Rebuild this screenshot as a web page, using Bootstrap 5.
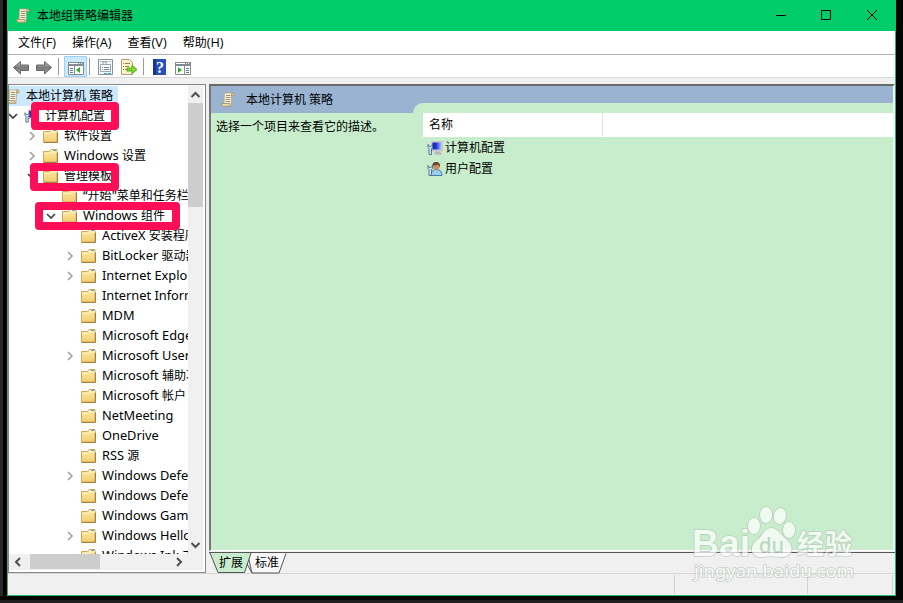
<!DOCTYPE html>
<html lang="zh-CN">
<head>
<meta charset="utf-8">
<title>本地组策略编辑器</title>
<link href="https://cdn.jsdelivr.net/npm/bootstrap@5.3.0/dist/css/bootstrap.min.css" rel="stylesheet">
<style>
body{width:903px;height:603px;background:#050505;font:12px/20px "Open Sans","Noto Sans CJK SC",sans-serif;color:#000;border-bottom:3px solid #202020}
svg{display:block;flex:none}
.la{font-family:"Noto Sans","Open Sans",sans-serif;font-size:12.8px;line-height:18px;padding-bottom:2px}
.side{width:7px;background:linear-gradient(90deg,#292929 0 3px,#000 3px)}
.win{width:889px;height:596px;background:#f0f0f0;border:solid #22b573;border-width:0 1px 1px}
.title-bar{height:31px;margin:0 -1px;background:#00cc6a;padding-left:9px}
.title-bar span{padding-left:7px}
.menus{height:24px;padding-left:10px;border-bottom:1px solid #b0b0b0}
.menus span{margin-right:16px}
.menus i{font-style:normal;font-size:12.7px}
.tools{height:23px;border-bottom:1px solid #d8d8d8}
.work{height:495px;padding-top:6px}
.tree-pane{width:198px;height:489px;border:1px solid #828790;margin-right:3px}
.tree-box{width:179px;height:469px;padding-top:1px}
.tr{height:20px;white-space:nowrap;position:relative}
.tr>svg{margin-right:6px}
.l1{padding-left:15px}.l2{padding-left:34px}.l3{padding-left:53px}.l4{padding-left:72px}
.tr .exp{position:absolute;margin:0;top:4px}
.l1 .exp{left:-1px}.l2 .exp{left:18px}.l3 .exp{left:37px}.l4 .exp{left:56px}
.sel{background:#cce8ff;width:109px}
.vbar{width:15px;background:#f0f0f0;height:469px}
.vthumb{height:104px;background:#cdcdcd}
.hbar{height:16px;background:#f0f0f0;width:194px}
.hthumb{width:70px;height:15px;background:#cdcdcd}
.right-pane{width:686px}
.result{height:467px;border:solid;border-width:2px 2px 1px 2px;border-color:#696969 #f4f4f4 #fff #777;background:#c8edcc}
.head{height:27px;background:#99b3d1;padding-left:10px}
.head span{padding-left:11px}
.notch{width:480px;height:10px;background:#c8edcc;border-top-left-radius:10px;align-self:flex-end}
.desc{width:212px;padding:4px 0 0 5px}
.colhead{height:24px;background:#fff;padding-left:6px}
.colname{width:174px;border-right:1px solid #e5e5e5;height:24px;line-height:23px}
.item{height:21px;padding-left:4px;gap:2px}
.tabs{height:22px;border-top:1px solid #555;margin-top:1px}
.tabs svg text{font-size:12px}
.status{height:22px;border-top:1px solid #d7d7d7}
.cell{border-right:1px solid #d2d2d2;margin:1px 0}
.mark-box{position:absolute;border:8px solid #ff0e57;border-radius:4px}
.wm{position:absolute;left:685px;top:500px}
</style>
<script src="https://cdn.jsdelivr.net/npm/bootstrap@5.3.0/dist/js/bootstrap.bundle.min.js"></script>
</head>
<body class="position-relative overflow-hidden m-0">
<svg width="0" height="0" class="position-absolute">
<linearGradient id="fg" x2="0" y2="1"><stop stop-color="#ffe9a6"/><stop offset="1" stop-color="#f3ce72"/></linearGradient>
<linearGradient id="ag" x2="0" y2="1"><stop stop-color="#c8c8c8"/><stop offset=".5" stop-color="#777"/><stop offset="1" stop-color="#aaa"/></linearGradient>
<linearGradient id="sg"><stop stop-color="#1420b4"/><stop offset=".45" stop-color="#1d36e0"/><stop offset="1" stop-color="#9db8ff"/></linearGradient>
<symbol id="folder" viewBox="0 0 15 14"><path d="M.5 2.500h6l1.500-2h6v12.500H.5z" fill="url(#fg)" stroke="#cfa858"/><path d="M1 4.500h6.500l1.500-1.500h5" fill="none" stroke="#fff1c2"/><path d="M8 1.500h3" stroke="#fff"/><path d="M10 1.500h3" stroke="#54a7e2"/><path d="M.5 13.500h14v-10" fill="none" stroke="#a9803a"/></symbol>
<symbol id="scroll" viewBox="0 0 14 15"><path d="M3.500 1h8l-1 2.500-.5 10.500H2l1-3z" fill="#fbf2d8" stroke="#b3a583" stroke-width=".8"/><path d="M11 .8q2.800.2 2 3h-2.500zM.6 11.500h8.200q-.8 1.500.8 2.700H2Q.4 13.500.6 11.500z" fill="#efdcae" stroke="#9d8a60" stroke-width=".8"/><path d="M5 3.500h4.500M5 5.500h4.500M4.500 7.500h4.500M4.500 9.500h4.500" stroke="#9b927e"/></symbol>
<symbol id="right" viewBox="0 0 10 12"><path d="M3 2l4 4-4 4" fill="none" stroke="#a0a0a0" stroke-width="1.600"/></symbol>
<symbol id="down" viewBox="0 0 10 12"><path d="M1 4l4 4 4-4" fill="none" stroke="#404040" stroke-width="1.700"/></symbol>
<symbol id="pc" viewBox="0 0 16 14"><path d="M4 0h12v10.500H4z" fill="#c9c9cf"/><path d="M5.500 1.500h8.500v7H5.500z" fill="url(#sg)"/><path d="M8 10.500h5l2 3H7z" fill="#b5b5b5"/><path d="M1 3.500v3l1 1v6h2.500v-6l1-1v-3L4 5.500H2.500z" fill="#d5e4ed" stroke="#47698a" stroke-width=".9"/></symbol>
<symbol id="user" viewBox="0 0 16 14"><path d="M4 13.500Q4 7.500 9 7.500q6 0 6 6z" fill="#9bcbee" stroke="#4d7fa5"/><circle cx="9.500" cy="4.500" r="3.300" fill="#c88f60"/><path d="M5.500 4Q5 0 9 0q4.500 0 4 5l-2-2.500z" fill="#654329"/><path d="M1 3.500v3l1 1v6h2.500v-6l1-1v-3L4 5.500H2.500z" fill="#d5e4ed" stroke="#47698a" stroke-width=".9"/></symbol>
</svg>
<div class="d-flex">
<div class="side"></div>
<main class="win">
<header class="title-bar d-flex align-items-center">
<svg width="14" height="15"><use href="#scroll"/></svg><span class="flex-grow-1">本地组策略编辑器</span>
<svg width="120" height="31"><g stroke="#000" fill="none"><path d="M0 15.500h10"/><path d="M45.500 10.500h9v9h-9z"/><path d="M91 10l10 10M101 10l-10 10"/></g></svg>
</header>
<nav class="menus bg-white d-flex align-items-center"><span>文件<i>(F)</i></span><span>操作<i>(A)</i></span><span>查看<i>(V)</i></span><span>帮助<i>(H)</i></span></nav>
<div class="tools bg-white">
<svg width="190" height="23">
<g fill="url(#ag)" stroke="#666"><path d="M5.500 12.500l7-6v3.500h8v5.500h-8v3.500z"/><path d="M43.500 12.500l-7-6v3.500h-8v5.500h8v3.500z"/></g>
<path d="M50.500 3v17M81.500 3v17M135.500 3v17" stroke="#999"/>
<path d="M56.500 1.500h22v20h-22z" fill="#cce8ff" stroke="#99d1ff"/>
<path d="M60.500 7.500h15v12h-15z" fill="#fff" stroke="#888"/><path d="M60 7h16v4H60z" fill="#858b92"/><path d="M61 8.500h9m1 0h1m1 0h1" stroke="#fff"/><path d="M66.500 11v8" stroke="#888"/><path d="M62 13.500h3m-3 2h3m-3 2h3" stroke="#527fa8"/><path d="M72 12v6l-4-3z" fill="#35ae22"/>
<path d="M90.500 4.500h14v15h-14z" fill="#f6f8fa" stroke="#8b9298"/><path d="M92 6.500h8m1 0h2" stroke="#9cb8c9"/><path d="M92.500 9.500h10v7h-10zM95 9v-2h3v2" fill="#fff" stroke="#9ca6af"/><path d="M94 12.500h1m1 0h5m-7 2h1m1 0h5" stroke="#718da5"/><path d="M96 18.500h3m1 0h3" stroke="#27aae8"/>
<path d="M113.500 4.500h8l3 3v12h-11z" fill="#fff2c4" stroke="#b0a080"/><path d="M115 8.500h1m1 0h5m-7 3h1m1 0h4m-6 3h1m1 0h4" stroke="#8b8060"/><path d="M119 13h5v-3l5 4.500-5 4.500v-3h-5z" fill="#7bd52e" stroke="#59aa27"/>
<path d="M145 4h13v16h-13z" fill="#2850bd"/><path d="M145 4h3v16h-3z" fill="#18348b"/><text x="148" y="17.500" fill="#fff" font-family="Liberation Serif" font-weight="700" font-size="16">?</text>
<path d="M167.500 7.500h15v12h-15z" fill="#fff" stroke="#888"/><path d="M167 7h16v4h-16z" fill="#858b92"/><path d="M168 8.500h9m1 0h1m1 0h1" stroke="#fff"/><path d="M176.500 11v8" stroke="#888"/><path d="M178 13.500h3m-3 2h3m-3 2h3" stroke="#527fa8"/><path d="M170 12v6l4-3z" fill="#35ae22"/>
</svg></div>
<div class="work d-flex">
<aside class="tree-pane bg-white">
<div class="d-flex">
<div class="tree-box overflow-hidden" id="tree">
<div class="tr d-flex align-items-center sel"><svg width="11" height="15" viewBox="3 0 11 15"><use href="#scroll" width="14" height="15"/></svg>本地计算机 策略</div>
<div class="tr d-flex align-items-center l1"><svg class="exp" width="10" height="12"><use href="#down"/></svg><svg width="15" height="14"><use href="#pc"/></svg>计算机配置</div>
<div class="tr d-flex align-items-center l2"><svg class="exp" width="10" height="12"><use href="#right"/></svg><svg width="15" height="14"><use href="#folder"/></svg>软件设置</div>
<div class="tr d-flex align-items-center l2"><svg class="exp" width="10" height="12"><use href="#right"/></svg><svg width="15" height="14"><use href="#folder"/></svg><span class="la">Windows&nbsp;</span>设置</div>
<div class="tr d-flex align-items-center l2"><svg class="exp" width="10" height="12"><use href="#down"/></svg><svg width="15" height="14"><use href="#folder"/></svg>管理模板</div>
<div class="tr d-flex align-items-center l3"><svg width="15" height="14"><use href="#folder"/></svg><span class="la">“</span>开始<span class="la">"</span>菜单和任务栏</div>
<div class="tr d-flex align-items-center l3"><svg class="exp" width="10" height="12"><use href="#down"/></svg><svg width="15" height="14"><use href="#folder"/></svg><span class="la">Windows&nbsp;</span>组件</div>
</div>
<div class="vbar d-flex flex-column align-items-center"><svg width="15" height="18"><path d="M3.500 12l4-4 4 4" fill="none" stroke="#505050" stroke-width="2"/></svg><div class="vthumb w-100"></div><svg class="mt-auto" width="15" height="17"><path d="M3.500 6l4 4 4-4" fill="none" stroke="#505050" stroke-width="2"/></svg></div>
</div>
<div class="hbar d-flex"><svg width="21" height="16"><path d="M11 4L7 8l4 4" fill="none" stroke="#505050" stroke-width="2"/></svg><div class="hthumb"></div><svg class="ms-auto" width="30" height="16"><path d="M4 4l4 4-4 4" fill="none" stroke="#505050" stroke-width="2"/></svg></div>
</aside>
<section class="right-pane">
<div class="result">
<div class="head d-flex align-items-center"><svg width="14" height="15"><use href="#scroll"/></svg><span class="me-auto">本地计算机 策略</span><div class="notch"></div></div>
<div class="d-flex"><div class="desc">选择一个项目来查看它的描述。</div>
<div class="flex-grow-1"><div class="colhead"><div class="colname">名称</div></div>
<div class="item d-flex align-items-center"><svg width="16" height="14"><use href="#pc"/></svg>计算机配置</div>
<div class="item d-flex align-items-center"><svg width="16" height="14"><use href="#user"/></svg>用户配置</div></div></div>
</div>
<div class="tabs"><svg width="90" height="21"><path d="M38.500.5L43 20h27l7-19.500" fill="#f8f8f8" stroke="#555"/><path d="M1 0l8 19.500h26.500L42 0" fill="#c8edcc" stroke="#555"/><path d="M38 11l5 9" stroke="#555"/><text x="10" y="14">扩展</text><text x="46" y="14">标准</text></svg></div>
</section>
</div>
<footer class="status d-flex"><div class="cell" style="width:667px"></div><div class="cell" style="width:133px"></div><div class="cell" style="width:85px"></div></footer>
</main>
</div>
<div class="mark-box" style="left:31px;top:102px;width:88px;height:28px"></div>
<div class="mark-box" style="left:30px;top:163px;width:89px;height:28px"></div>
<div class="mark-box" style="left:35px;top:202px;width:145px;height:28px"></div>
<svg class="wm" width="180" height="90" opacity=".72"><g fill="#fff" stroke="#b4c4b6" stroke-width="1.600" paint-order="stroke" stroke-linejoin="round">
<text x="7" y="56" font-family="Liberation Sans" font-weight="700" font-size="36" textLength="58" lengthAdjust="spacingAndGlyphs">Bai</text>
<ellipse cx="69" cy="26" rx="6" ry="8"/><ellipse cx="81" cy="15" rx="6" ry="8"/><ellipse cx="95" cy="16" rx="6" ry="8" transform="rotate(12 95 16)"/><ellipse cx="104" cy="30" rx="6" ry="8"/>
<path d="M86 28c-6 0-8 7-14 12-10 8-4 18 5 17 6-1 11-1 17 0 12 1 17-8 8-17-6-5-9-12-16-12z"/>
<text x="112" y="54" font-family="Noto Sans CJK SC" font-weight="700" font-size="27" textLength="55">经验</text>
<text x="9" y="77" font-family="Noto Sans" font-size="17" textLength="160" lengthAdjust="spacingAndGlyphs">jingyan.baidu.com</text></g>
<text x="74" y="53" font-family="Noto Sans" font-weight="500" font-size="21" fill="#b4d2b9" textLength="25" lengthAdjust="spacingAndGlyphs">du</text></svg>
<script>
// Entries below "Windows 组件": [expandable, Latin text, Chinese text]
[[0,"ActiveX ","安装程序服务"],[1,"BitLocker ","驱动器加密"],[1,"Internet Explorer",""],[0,"Internet Information",""],[0,"MDM",""],[0,"Microsoft Edge",""],[1,"Microsoft User",""],[0,"Microsoft ","辅助功能"],[0,"Microsoft ","帐户"],[0,"NetMeeting",""],[0,"OneDrive",""],[0,"RSS ","源"],[1,"Windows Defender",""],[0,"Windows Defender",""],[0,"Windows Game",""],[1,"Windows Hello",""],[0,"Windows Ink 工作区",""]].forEach(([e,a,b])=>{
document.getElementById("tree").insertAdjacentHTML("beforeend",`<div class="tr d-flex align-items-center l4">${e?'<svg class="exp" width="10" height="12"><use href="#right"/></svg>':''}<svg width="15" height="14"><use href="#folder"/></svg><span class="la">${a.replace(/ /g,"&nbsp;")}</span>${b}</div>`)});
</script>
</body>
</html>
